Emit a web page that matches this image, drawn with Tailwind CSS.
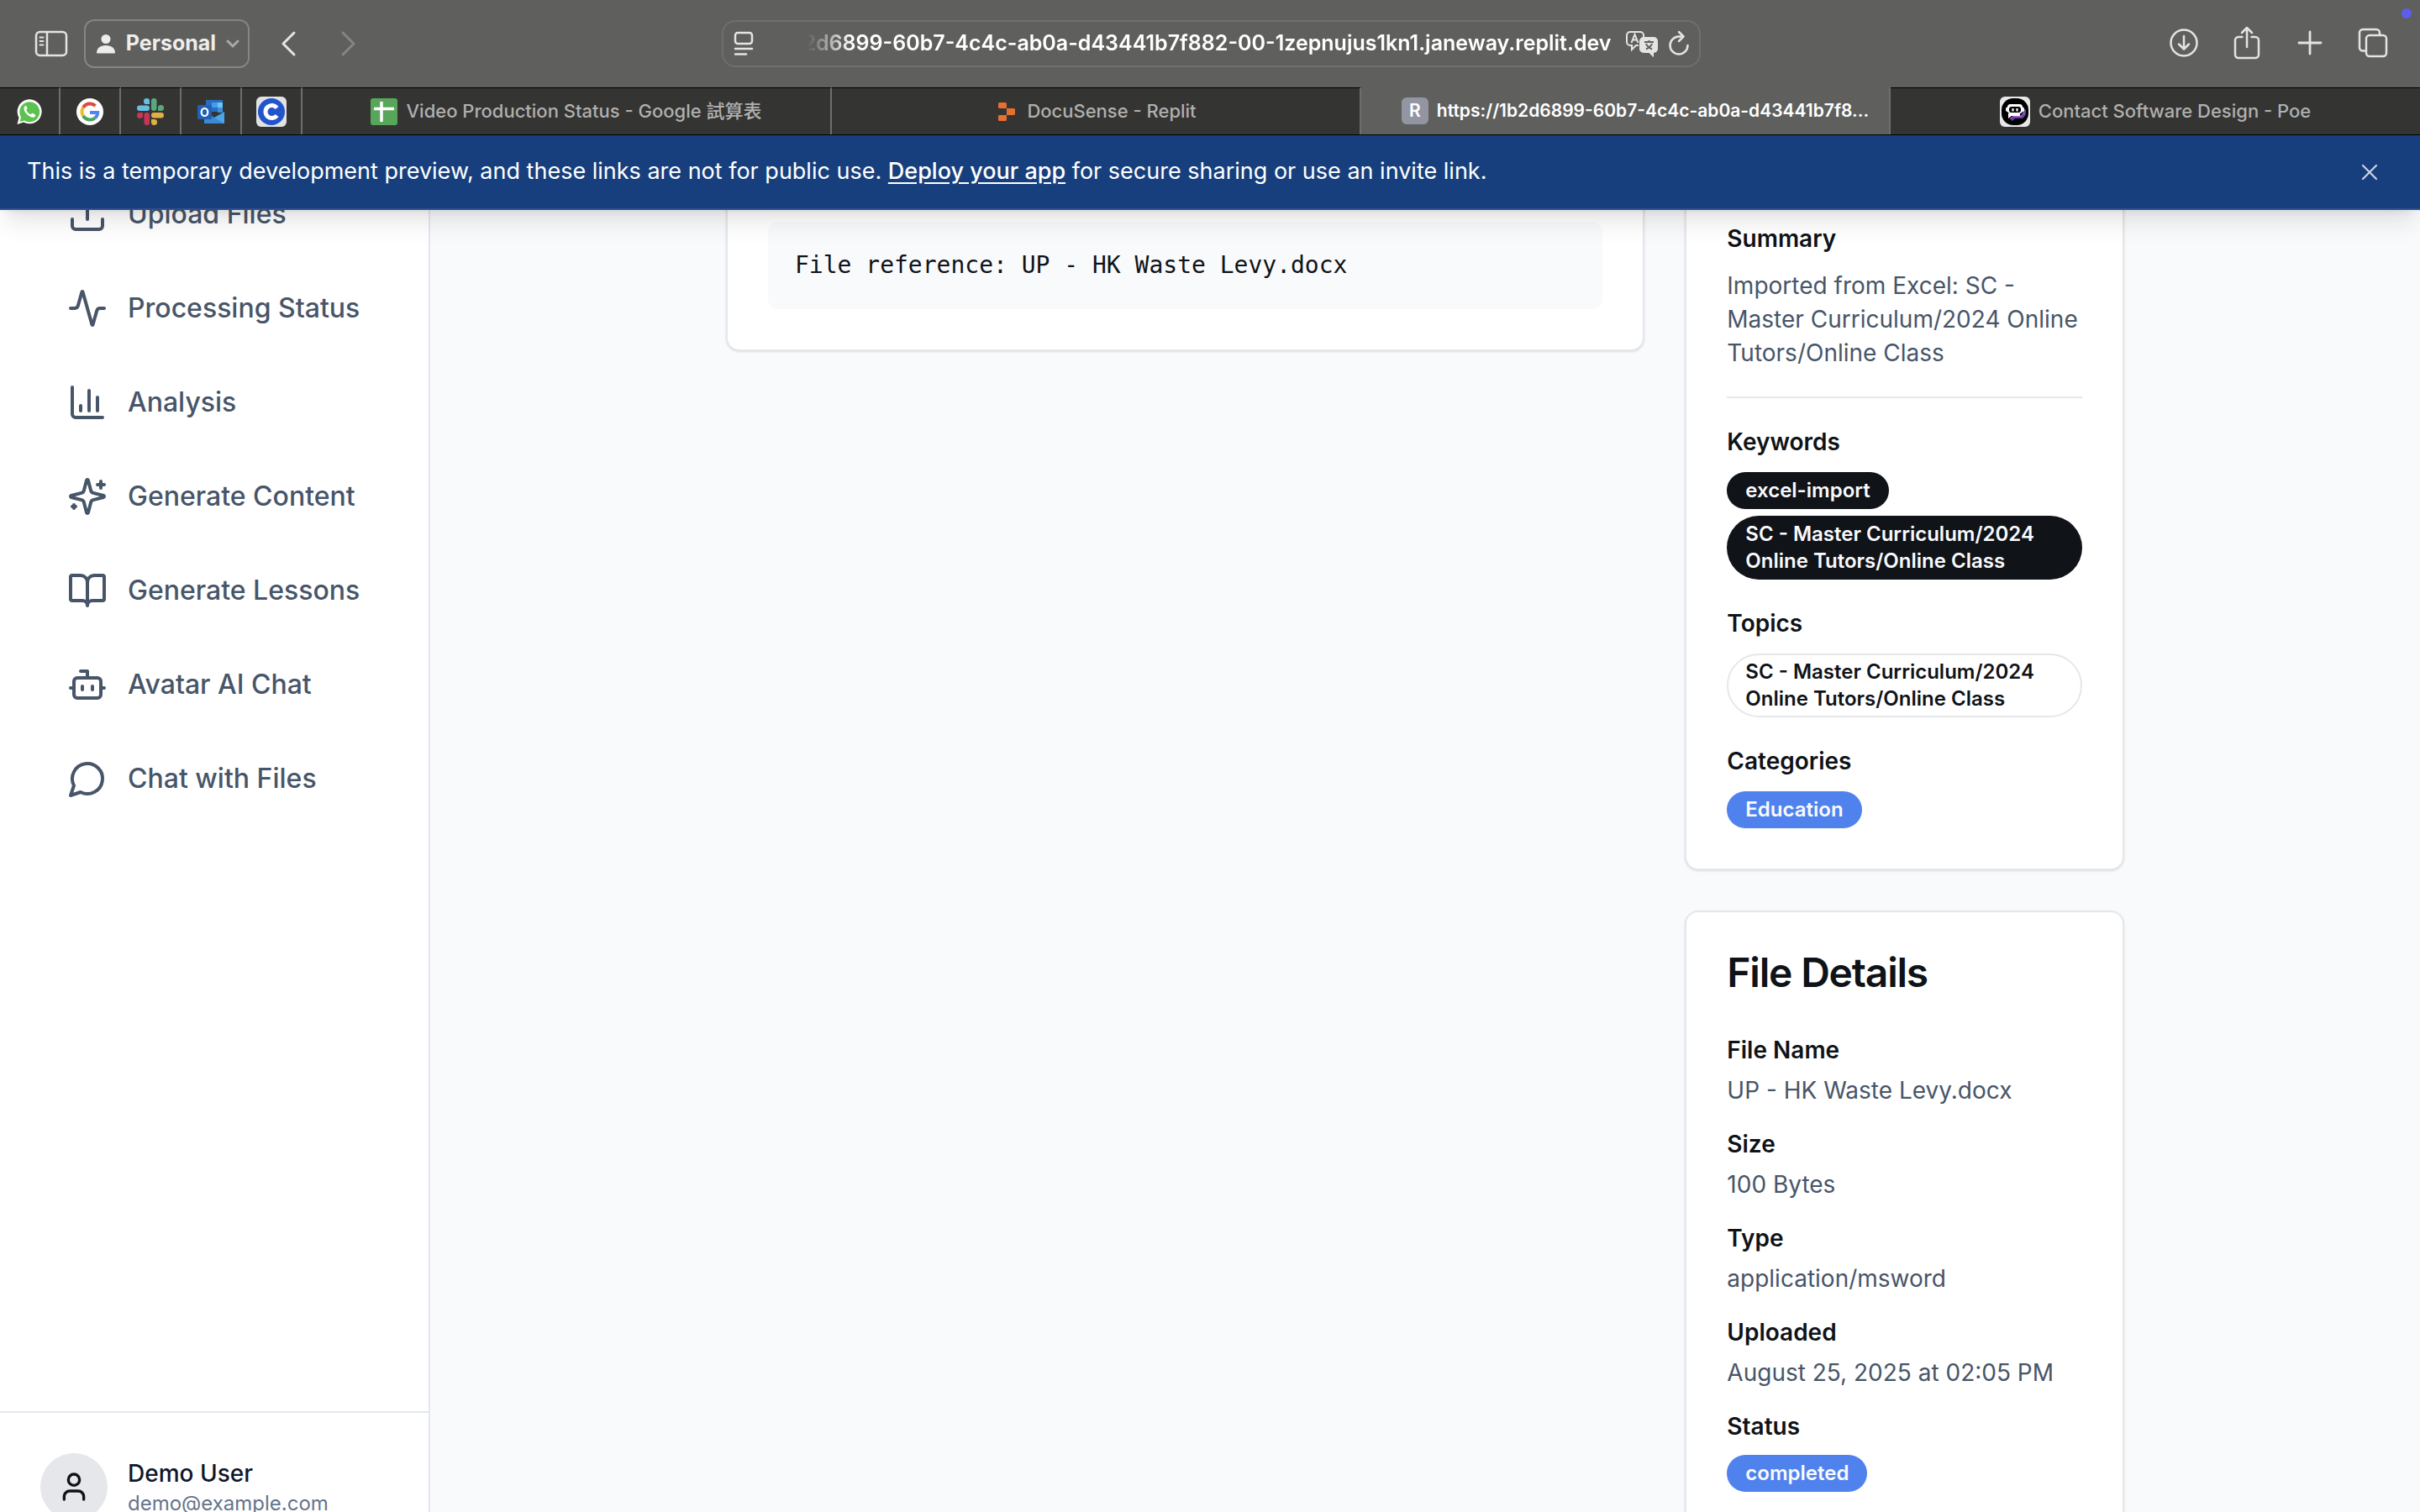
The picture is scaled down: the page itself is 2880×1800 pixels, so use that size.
<!DOCTYPE html>
<html lang="en">
<head>
<meta charset="utf-8">
<title>DocuSense</title>
<script src="https://cdn.jsdelivr.net/npm/@tailwindcss/browser@4"></script>
</head>
<body class="flex h-screen flex-col overflow-hidden bg-[#f9fafc] font-['Inter','Noto_Sans_CJK_TC',sans-serif] text-[#0f1318]">

<!-- Browser toolbar -->
<header class="relative flex h-[104px] shrink-0 items-center bg-[#5f5f5d] text-[#e4e4e4]">
  <div class="flex flex-1 items-center pl-10">
    <button aria-label="Sidebar"><svg class="h-[34px] w-[42px]" viewBox="0 0 42 34" fill="none" stroke="currentColor" stroke-width="2.500"><rect x="3" y="3" width="36" height="28" rx="4.500"/><path d="M16 3v28"/><path d="M7.500 9.500h4M7.500 14h4M7.500 18.500h4" stroke-width="1.800" stroke-linecap="round"/></svg></button>
    <button class="ml-[18px] flex h-[58px] w-[197px] items-center justify-between rounded-xl border-2 border-[#858583] pl-3 pr-2.5 text-[25px] font-bold text-[#ededed]">
      <svg class="h-6 w-6" viewBox="0 0 24 24" fill="currentColor"><circle cx="12" cy="6.500" r="5.500"/><path d="M1 23.500c0-6 4-9.500 11-9.500s11 3.500 11 9.500z"/></svg>
      <span>Personal</span>
      <svg class="h-4 w-4" viewBox="0 0 16 16" fill="none" stroke="#a9a9a9" stroke-width="3" stroke-linecap="round" stroke-linejoin="round"><path d="M2 5l6 6 6-6"/></svg>
    </button>
    <button aria-label="Back" class="ml-9"><svg class="h-8 w-5" viewBox="0 0 20 32" fill="none" stroke="currentColor" stroke-width="3" stroke-linecap="round" stroke-linejoin="round"><path d="M17 3L4 16l13 13"/></svg></button>
    <button aria-label="Forward" class="ml-[52px]"><svg class="h-8 w-5" viewBox="0 0 20 32" fill="none" stroke="#858583" stroke-width="3" stroke-linecap="round" stroke-linejoin="round"><path d="M3 3l13 13L3 29"/></svg></button>
  </div>
  <div class="flex h-14 w-[1165px] items-center rounded-2xl border-2 border-[#6f6f6d] px-3">
    <svg class="h-8 w-6" viewBox="0 0 24 32" fill="none" stroke="currentColor" stroke-width="2.500" stroke-linecap="round"><rect x="2" y="3" width="20" height="13" rx="3"/><path d="M2 22h20M2 28.500h13"/></svg>
    <input aria-label="Address" class="ml-4 min-w-0 flex-1 bg-transparent text-right text-[25px] font-semibold text-white outline-none [mask-image:linear-gradient(to_right,transparent_48px,black_100px)]" value="2d6899-60b7-4c4c-ab0a-d43441b7f882-00-1zepnujus1kn1.janeway.replit.dev">
    <button aria-label="Translate" class="ml-4"><svg class="h-8 w-10" viewBox="0 0 40 32" fill="none" stroke="currentColor" stroke-width="2"><path d="M16 18H13l-5 5v-5H6a4 4 0 0 1-4-4V6a4 4 0 0 1 4-4h12a4 4 0 0 1 4 4v2"/><path d="M7.500 15l4-10 4 10M9 11.500h5"/><path d="M22 9h12a4 4 0 0 1 4 4v9a4 4 0 0 1-4 4h-1v4l-4-4h-7a4 4 0 0 1-4-4v-9a4 4 0 0 1 4-4z" fill="currentColor"/><path d="M23 14h11M28.500 12v2M25 16c1 3 4 5 7 6.500M32 16c-1 3-4 5-7 6.500" stroke="#5f5f5d"/></svg></button>
    <button aria-label="Reload" class="ml-3"><svg class="h-8 w-6" viewBox="0 0 24 32" fill="none" stroke="currentColor" stroke-width="2.500" stroke-linecap="round" stroke-linejoin="round"><path d="M22.500 18A10.500 10.500 0 1 1 12 7.500h5"/><path d="M12 2l5.500 5.500L12 13"/></svg></button>
  </div>
  <div class="flex flex-1 items-center justify-end gap-[39px] pr-[38px] pb-0.5">
    <button aria-label="Downloads"><svg class="h-9 w-9" viewBox="0 0 36 36" fill="none" stroke="currentColor" stroke-width="2.500" stroke-linecap="round" stroke-linejoin="round"><circle cx="18" cy="18" r="15.500"/><path d="M18 10v15M12 19.500l6 6 6-6"/></svg></button>
    <button aria-label="Share"><svg class="h-10 w-9" viewBox="0 0 36 40" fill="none" stroke="currentColor" stroke-width="2.500" stroke-linecap="round" stroke-linejoin="round"><path d="M12.500 13H8a4 4 0 0 0-4 4v17a4 4 0 0 0 4 4h20a4 4 0 0 0 4-4V17a4 4 0 0 0-4-4h-4.500M18 25V2M12 8l6-6 6 6"/></svg></button>
    <button aria-label="New tab"><svg class="h-9 w-9" viewBox="0 0 36 36" fill="none" stroke="currentColor" stroke-width="2.800" stroke-linecap="round"><path d="M18 5v26M5 18h26"/></svg></button>
    <button aria-label="Tab overview"><svg class="h-9 w-9" viewBox="0 0 36 36" fill="none" stroke="currentColor" stroke-width="2.500"><path d="M9 27.500H6a4 4 0 0 1-4-4V6a4 4 0 0 1 4-4h16a4 4 0 0 1 4 4v3"/><rect x="10" y="9" width="24" height="25" rx="4"/></svg></button>
  </div>
  <span class="absolute right-2.5 top-2.5 size-3 rounded-full bg-[#5f5cf0]"></span>
</header>

<!-- Tab strip -->
<nav aria-label="Tabs" class="grid h-[57px] shrink-0 grid-cols-[auto_repeat(4,minmax(0,1fr))] border-b border-black bg-[#5f5f5d] text-[22px] font-medium text-[#b0b0af]">
  <div class="flex bg-[#343433]">
    <a href="#" aria-label="WhatsApp" class="flex w-[72px] items-center justify-center border-r-2 border-t border-r-[#6e6e6d] border-t-black"><svg class="size-8" viewBox="0 0 32 32"><path d="M1.500 31l2-8A14.500 14.500 0 1 1 9 28.500z" fill="#fff"/><path d="M4.500 28l1.500-5.500a12 12 0 1 1 4 4z" fill="#5bc14f"/><path d="M11 9c-3 2-1 7 2 10s8 5.500 10 2.500c1-1.500 0-2-2.500-3.500-2-1-2 1.500-3.500 1s-4-3-4.500-4.500 1.500-1.500 1-3S12 8 11 9z" fill="#fff"/></svg></a>
    <a href="#" aria-label="Google" class="flex w-[72px] items-center justify-center border-r-2 border-t border-r-[#6e6e6d] border-t-black"><svg class="size-8" viewBox="0 0 32 32" fill="none" stroke-width="4"><circle cx="16" cy="16" r="16" fill="#fff"/><path d="M22.500 9A9.500 9.500 0 0 0 8 11" stroke="#dc4b3e"/><path d="M8 11a9.500 9.500 0 0 0 0 10" stroke="#f3b92d"/><path d="M8 21a9.500 9.500 0 0 0 14 2.500" stroke="#4aa459"/><path d="M22 23.500c2.500-2 3.200-4 3.200-6.500H16" stroke="#4e86ec"/></svg></a>
    <a href="#" aria-label="Slack" class="flex w-[72px] items-center justify-center border-r-2 border-t border-r-[#6e6e6d] border-t-black"><svg class="size-8" viewBox="0 0 32 32"><g fill="#66bfe3"><rect x="0" y="8.500" width="15" height="6.500" rx="3.200"/><path d="M15 7h-3a3.500 3.500 0 1 1 3-3.500z"/></g><g fill="#59a97e"><rect x="17" y="0" width="6.500" height="15" rx="3.200"/><path d="M25 15v-3a3.500 3.500 0 1 1 3.500 3z"/></g><g fill="#dfb13f"><rect x="17" y="17" width="15" height="6.500" rx="3.200"/><path d="M17 25h3a3.500 3.500 0 1 1-3 3.500z"/></g><g fill="#c73557"><rect x="8.500" y="17" width="6.500" height="15" rx="3.200"/><path d="M7 17v3a3.500 3.500 0 1 1-3.500-3z"/></g></svg></a>
    <a href="#" aria-label="Outlook" class="flex w-[72px] items-center justify-center border-r-2 border-t border-r-[#6e6e6d] border-t-black"><svg class="size-8" viewBox="0 0 32 32"><path d="M10 2h20v14H10z" fill="#2b6cc0"/><path d="M17 5h7v6h-7z" fill="#3fa0e8"/><path d="M24 5h6v6h-6z" fill="#66c7f4"/><path d="M24 11h6v6h-6z" fill="#3f8fe0"/><path d="M8 16l12 7 12-7v14H8z" fill="#4ba5e8"/><path d="M8 16l24 14H8z" fill="#3a8ad8"/><rect y="8" width="17" height="17" rx="1.500" fill="#2160b4"/><ellipse cx="8.500" cy="16.500" rx="3.800" ry="4.500" fill="none" stroke="#fff" stroke-width="2.200"/></svg></a>
    <a href="#" aria-label="C" class="flex w-[72px] items-center justify-center border-r-2 border-t border-r-[#6e6e6d] border-t-black"><svg class="size-9" viewBox="0 0 36 36"><rect width="36" height="36" rx="6" fill="#e2e2e2"/><circle cx="18" cy="18" r="16" fill="#2254cc"/><path d="M24.500 13.500a7.500 7.500 0 1 0 0 9" fill="none" stroke="#fff" stroke-width="5"/></svg></a>
  </div>
  <a href="#" class="flex items-center justify-center gap-2.5 border-r-2 border-t border-r-[#6e6e6d] border-t-black bg-[#343433] px-4">
    <svg class="size-8 shrink-0" viewBox="0 0 32 32"><rect width="32" height="32" rx="3" fill="#57a65a"/><path d="M13 4v24M4 12.500h24" stroke="#fff" stroke-width="3.500"/></svg>
    <span class="truncate">Video Production Status - Google 試算表</span>
  </a>
  <a href="#" class="flex items-center justify-center gap-2.5 border-r-2 border-t border-r-[#6e6e6d] border-t-black bg-[#343433] px-4">
    <svg class="size-7 shrink-0" viewBox="0 0 28 28" fill="#e5702f"><path d="M4 4.500A1.500 1.500 0 0 1 5.500 3h7A1.500 1.500 0 0 1 14 4.500V10H5.500A1.500 1.500 0 0 1 4 8.500zM14 10h8.500a1.500 1.500 0 0 1 1.500 1.500v5a1.500 1.500 0 0 1-1.500 1.500H14zM4 19.500A1.500 1.500 0 0 1 5.500 18H14v5.500a1.500 1.500 0 0 1-1.500 1.500h-7A1.500 1.500 0 0 1 4 23.500z"/></svg>
    <span class="truncate">DocuSense - Replit</span>
  </a>
  <a href="#" class="flex items-center justify-center gap-2.5 border-r-2 border-r-[#6e6e6d] pl-10 pr-4 text-[21px] font-semibold text-white">
    <span class="flex size-8 shrink-0 items-center justify-center rounded-md bg-[#9395a3]">R</span>
    <span class="truncate">https://1b2d6899-60b7-4c4c-ab0a-d43441b7f8...</span>
  </a>
  <a href="#" class="flex items-center justify-center gap-2.5 border-t border-t-black bg-[#343433] px-4">
    <svg class="size-9 shrink-0" viewBox="0 0 36 36"><rect width="36" height="36" rx="6" fill="#e8e8e8"/><rect x="2" y="2" width="32" height="32" rx="14" fill="#000"/><path d="M30 15v6l-3 4h-9l-4 3.500" fill="none" stroke="#4f62d8" stroke-width="1.500"/><path d="M28.500 16v4l-3 3.500h-9l-4 3.500" fill="none" stroke="#d45be0" stroke-width="1.500"/><path d="M10 20h14v3H14l-4 3z" fill="#fff"/><rect x="9" y="9" width="18" height="11" rx="3.500" fill="#fff"/><rect x="7" y="12.500" width="22" height="5.500" rx="2" fill="#fff"/><rect x="11" y="12" width="14" height="7" rx="3" fill="#000"/><path d="M15.500 14v3.500M20.500 14v3.500" stroke="#fff" stroke-width="2.200"/></svg>
    <span class="truncate">Contact Software Design - Poe</span>
  </a>
</nav>

<!-- Page -->
<div class="relative flex min-h-0 flex-1 overflow-hidden">
  <div class="absolute inset-x-0 top-0 z-10 flex h-[89px] items-center justify-between border-b-2 border-[#2f4f8c] bg-[#173f7d] pl-8 pr-12 text-[27px] text-white shadow-[0_20px_30px_-6px_rgba(0,0,0,0.1),0_8px_12px_-8px_rgba(0,0,0,0.1)]">
    <p>This is a temporary development preview, and these links are not for public use. <a href="#" class="font-medium underline underline-offset-4">Deploy your app</a> for secure sharing or use an invite link.</p>
    <button aria-label="Dismiss"><svg class="size-6" viewBox="0 0 24 24" fill="none" stroke="#c9d3e4" stroke-width="2.200" stroke-linecap="round"><path d="M4 4l16 16M20 4L4 20"/></svg></button>
  </div>

  <aside class="flex w-[512px] shrink-0 flex-col border-r-2 border-[#e2e8f0] bg-white">
    <nav aria-label="Main" class="flex flex-1 flex-col gap-4 px-12 pt-[46px] text-[32px] font-medium text-[#475569]">
      <a href="#" class="flex h-24 items-center gap-6 px-8"><svg class="size-12" viewBox="0 0 24 24" fill="none" stroke="currentColor" stroke-width="2" stroke-linecap="round" stroke-linejoin="round"><path d="M21 15v4a2 2 0 0 1-2 2H5a2 2 0 0 1-2-2v-4M17 8l-5-5-5 5M12 3v12"/></svg>Upload Files</a>
      <a href="#" class="flex h-24 items-center gap-6 px-8"><svg class="size-12" viewBox="0 0 24 24" fill="none" stroke="currentColor" stroke-width="2" stroke-linecap="round" stroke-linejoin="round"><path d="M22 12h-2.480a2 2 0 0 0-1.930 1.460l-2.350 8.360a.25.25 0 0 1-.48 0L9.240 2.180a.25.25 0 0 0-.48 0l-2.350 8.360A2 2 0 0 1 4.490 12H2"/></svg>Processing Status</a>
      <a href="#" class="flex h-24 items-center gap-6 px-8"><svg class="size-12" viewBox="0 0 24 24" fill="none" stroke="currentColor" stroke-width="2" stroke-linecap="round" stroke-linejoin="round"><path d="M3 3v16a2 2 0 0 0 2 2h16M18 17V9M13 17V5M8 17v-3"/></svg>Analysis</a>
      <a href="#" class="flex h-24 items-center gap-6 px-8"><svg class="size-12" viewBox="0 0 24 24" fill="none" stroke="currentColor" stroke-width="2" stroke-linecap="round" stroke-linejoin="round"><path d="M9.937 15.500A2 2 0 0 0 8.500 14.063l-6.135-1.582a.5.5 0 0 1 0-.962L8.500 9.936A2 2 0 0 0 9.937 8.500l1.582-6.135a.5.5 0 0 1 .963 0L14.063 8.500A2 2 0 0 0 15.500 9.937l6.135 1.581a.5.5 0 0 1 0 .964L15.500 14.063a2 2 0 0 0-1.437 1.437l-1.582 6.135a.5.5 0 0 1-.963 0zM20 3v4M22 5h-4M4 17v2M5 18H3"/></svg>Generate Content</a>
      <a href="#" class="flex h-24 items-center gap-6 px-8"><svg class="size-12" viewBox="0 0 24 24" fill="none" stroke="currentColor" stroke-width="2" stroke-linecap="round" stroke-linejoin="round"><path d="M12 7v14M3 18a1 1 0 0 1-1-1V4a1 1 0 0 1 1-1h5a4 4 0 0 1 4 4 4 4 0 0 1 4-4h5a1 1 0 0 1 1 1v13a1 1 0 0 1-1 1h-6a3 3 0 0 0-3 3 3 3 0 0 0-3-3z"/></svg>Generate Lessons</a>
      <a href="#" class="flex h-24 items-center gap-6 px-8"><svg class="size-12" viewBox="0 0 24 24" fill="none" stroke="currentColor" stroke-width="2" stroke-linecap="round" stroke-linejoin="round"><path d="M12 8V4H8"/><rect width="16" height="12" x="4" y="8" rx="2"/><path d="M2 14h2M20 14h2M15 13v2M9 13v2"/></svg>Avatar AI Chat</a>
      <a href="#" class="flex h-24 items-center gap-6 px-8"><svg class="size-12" viewBox="0 0 24 24" fill="none" stroke="currentColor" stroke-width="2" stroke-linecap="round" stroke-linejoin="round"><path d="M7.900 20A9 9 0 1 0 4 16.100L2 22Z"/></svg>Chat with Files</a>
    </nav>
    <div class="flex h-[120px] shrink-0 items-start gap-6 overflow-hidden border-t-2 border-[#e2e8f0] px-12 pt-12">
      <span class="flex size-20 shrink-0 items-center justify-center rounded-full bg-[#e5e7eb]"><svg class="size-10" viewBox="0 0 24 24" fill="none" stroke="currentColor" stroke-width="2" stroke-linecap="round" stroke-linejoin="round"><path d="M19 21v-2a4 4 0 0 0-4-4H9a4 4 0 0 0-4 4v2"/><circle cx="12" cy="7" r="4"/></svg></span>
      <div class="pt-1">
        <p class="text-[28px] leading-10 font-medium text-[#0f172a]">Demo User</p>
        <p class="text-2xl leading-8 text-[#64748b]">demo@example.com</p>
      </div>
    </div>
  </aside>

  <main class="min-w-0 flex-1">
    <div class="mx-auto grid max-w-[1664px] grid-cols-3 items-start gap-12">
      <section class="col-span-2 rounded-b-2xl border-2 border-t-0 border-[#e5e7eb] bg-white px-12 pt-[103px] pb-12 shadow-sm">
        <pre class="rounded-xl bg-[#f9fafc] p-8 font-['DejaVu_Sans_Mono',monospace] text-[28px] leading-10">File reference: UP - HK Waste Levy.docx</pre>
      </section>

      <div class="flex flex-col gap-12">
        <section class="flex flex-col gap-8 rounded-b-2xl border-2 border-t-0 border-[#e5e7eb] bg-white px-12 pt-[103px] pb-12 text-[28px] leading-10 shadow-sm">
          <div>
            <h4 class="mb-4 font-semibold">Summary</h4>
            <p class="text-[#475569]">Imported from Excel: SC - Master Curriculum/2024 Online Tutors/Online Class</p>
          </div>
          <hr class="border-t-2 border-[#e5e7eb]">
          <div>
            <h4 class="mb-4 font-semibold">Keywords</h4>
            <div class="flex flex-col items-start gap-2 text-2xl leading-8 font-semibold text-[#f9fafc]">
              <span class="rounded-[38px] bg-[#101318] px-[22px] py-1.5">excel-import</span>
              <span class="rounded-[38px] bg-[#101318] px-[22px] py-1.5">SC - Master Curriculum/2024 Online Tutors/Online Class</span>
            </div>
          </div>
          <div>
            <h4 class="mb-4 font-semibold">Topics</h4>
            <div class="flex text-2xl leading-8 font-semibold"><span class="rounded-[38px] border-2 border-[#e5e7eb] px-5 py-1">SC - Master Curriculum/2024 Online Tutors/Online Class</span></div>
          </div>
          <div>
            <h4 class="mb-4 font-semibold">Categories</h4>
            <div class="flex text-2xl leading-8 font-semibold text-[#f9fafc]"><span class="rounded-[38px] bg-[#5082ee] px-[22px] py-1.5">Education</span></div>
          </div>
        </section>

        <section class="rounded-2xl border-2 border-[#e5e7eb] bg-white p-12 text-[28px] leading-10 shadow-sm">
          <h3 class="mb-12 text-5xl leading-none font-semibold tracking-tight">File Details</h3>
          <dl class="flex flex-col gap-6">
            <div class="flex flex-col gap-2"><dt class="font-semibold">File Name</dt><dd class="text-[#475569]">UP - HK Waste Levy.docx</dd></div>
            <div class="flex flex-col gap-2"><dt class="font-semibold">Size</dt><dd class="text-[#475569]">100 Bytes</dd></div>
            <div class="flex flex-col gap-2"><dt class="font-semibold">Type</dt><dd class="text-[#475569]">application/msword</dd></div>
            <div class="flex flex-col gap-2"><dt class="font-semibold">Uploaded</dt><dd class="text-[#475569]">August 25, 2025 at 02:05 PM</dd></div>
            <div class="flex flex-col gap-3.5"><dt class="font-semibold">Status</dt><dd class="flex text-2xl leading-8 font-semibold text-[#f9fafc]"><span class="rounded-[38px] bg-[#5082ee] px-[22px] py-1.5">completed</span></dd></div>
          </dl>
        </section>
      </div>
    </div>
  </main>
</div>
</body>
</html>
